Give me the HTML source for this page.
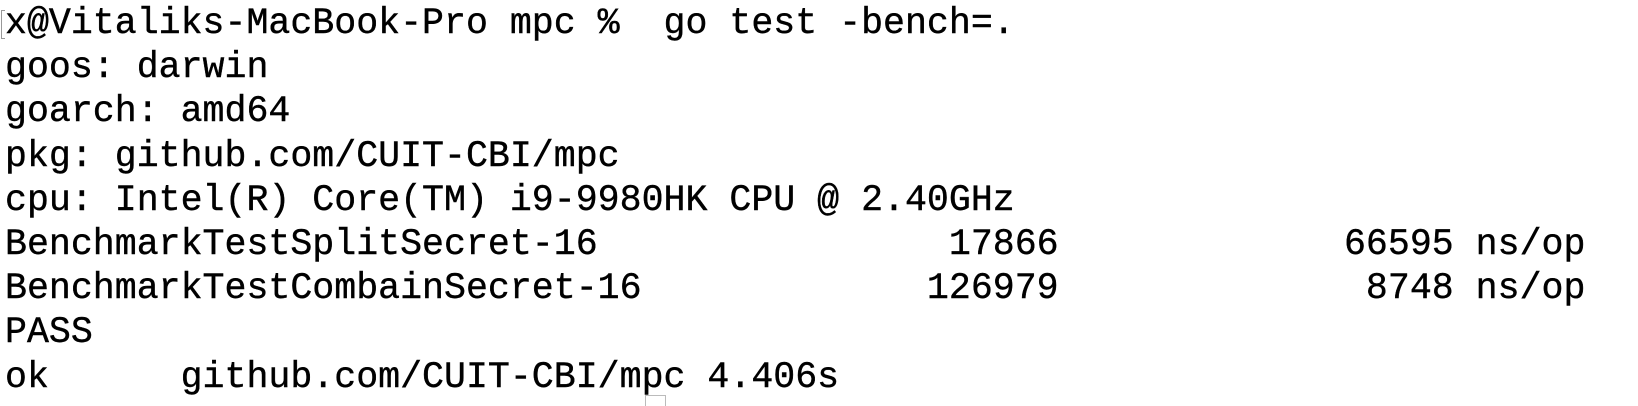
<!DOCTYPE html>
<html><head><style>
html,body{margin:0;padding:0;background:#fff;width:1638px;height:400px;overflow:hidden}
pre{margin:0;position:absolute;left:5px;top:2px;font-family:"Liberation Mono",monospace;font-size:36.6px;line-height:44.2px;color:#000;letter-spacing:0;-webkit-text-stroke:0.4px #000}
.b{position:absolute;left:1px;top:10px;width:3px;height:27px;border:1px solid #999;border-right:none}
.c{position:absolute;left:645px;top:395px;width:19px;height:10px;border:1px solid #bbb;border-bottom:none}
</style></head><body>
<div class="b"></div>
<pre>x@Vitaliks-MacBook-Pro mpc %  go test -bench=.
goos: darwin
goarch: amd64
pkg: github.com/CUIT-CBI/mpc
cpu: Intel(R) Core(TM) i9-9980HK CPU @ 2.40GHz
BenchmarkTestSplitSecret-16                17866             66595 ns/op
BenchmarkTestCombainSecret-16             126979              8748 ns/op
PASS
ok      github.com/CUIT-CBI/mpc 4.406s</pre>
<div class="c"></div>
</body></html>
